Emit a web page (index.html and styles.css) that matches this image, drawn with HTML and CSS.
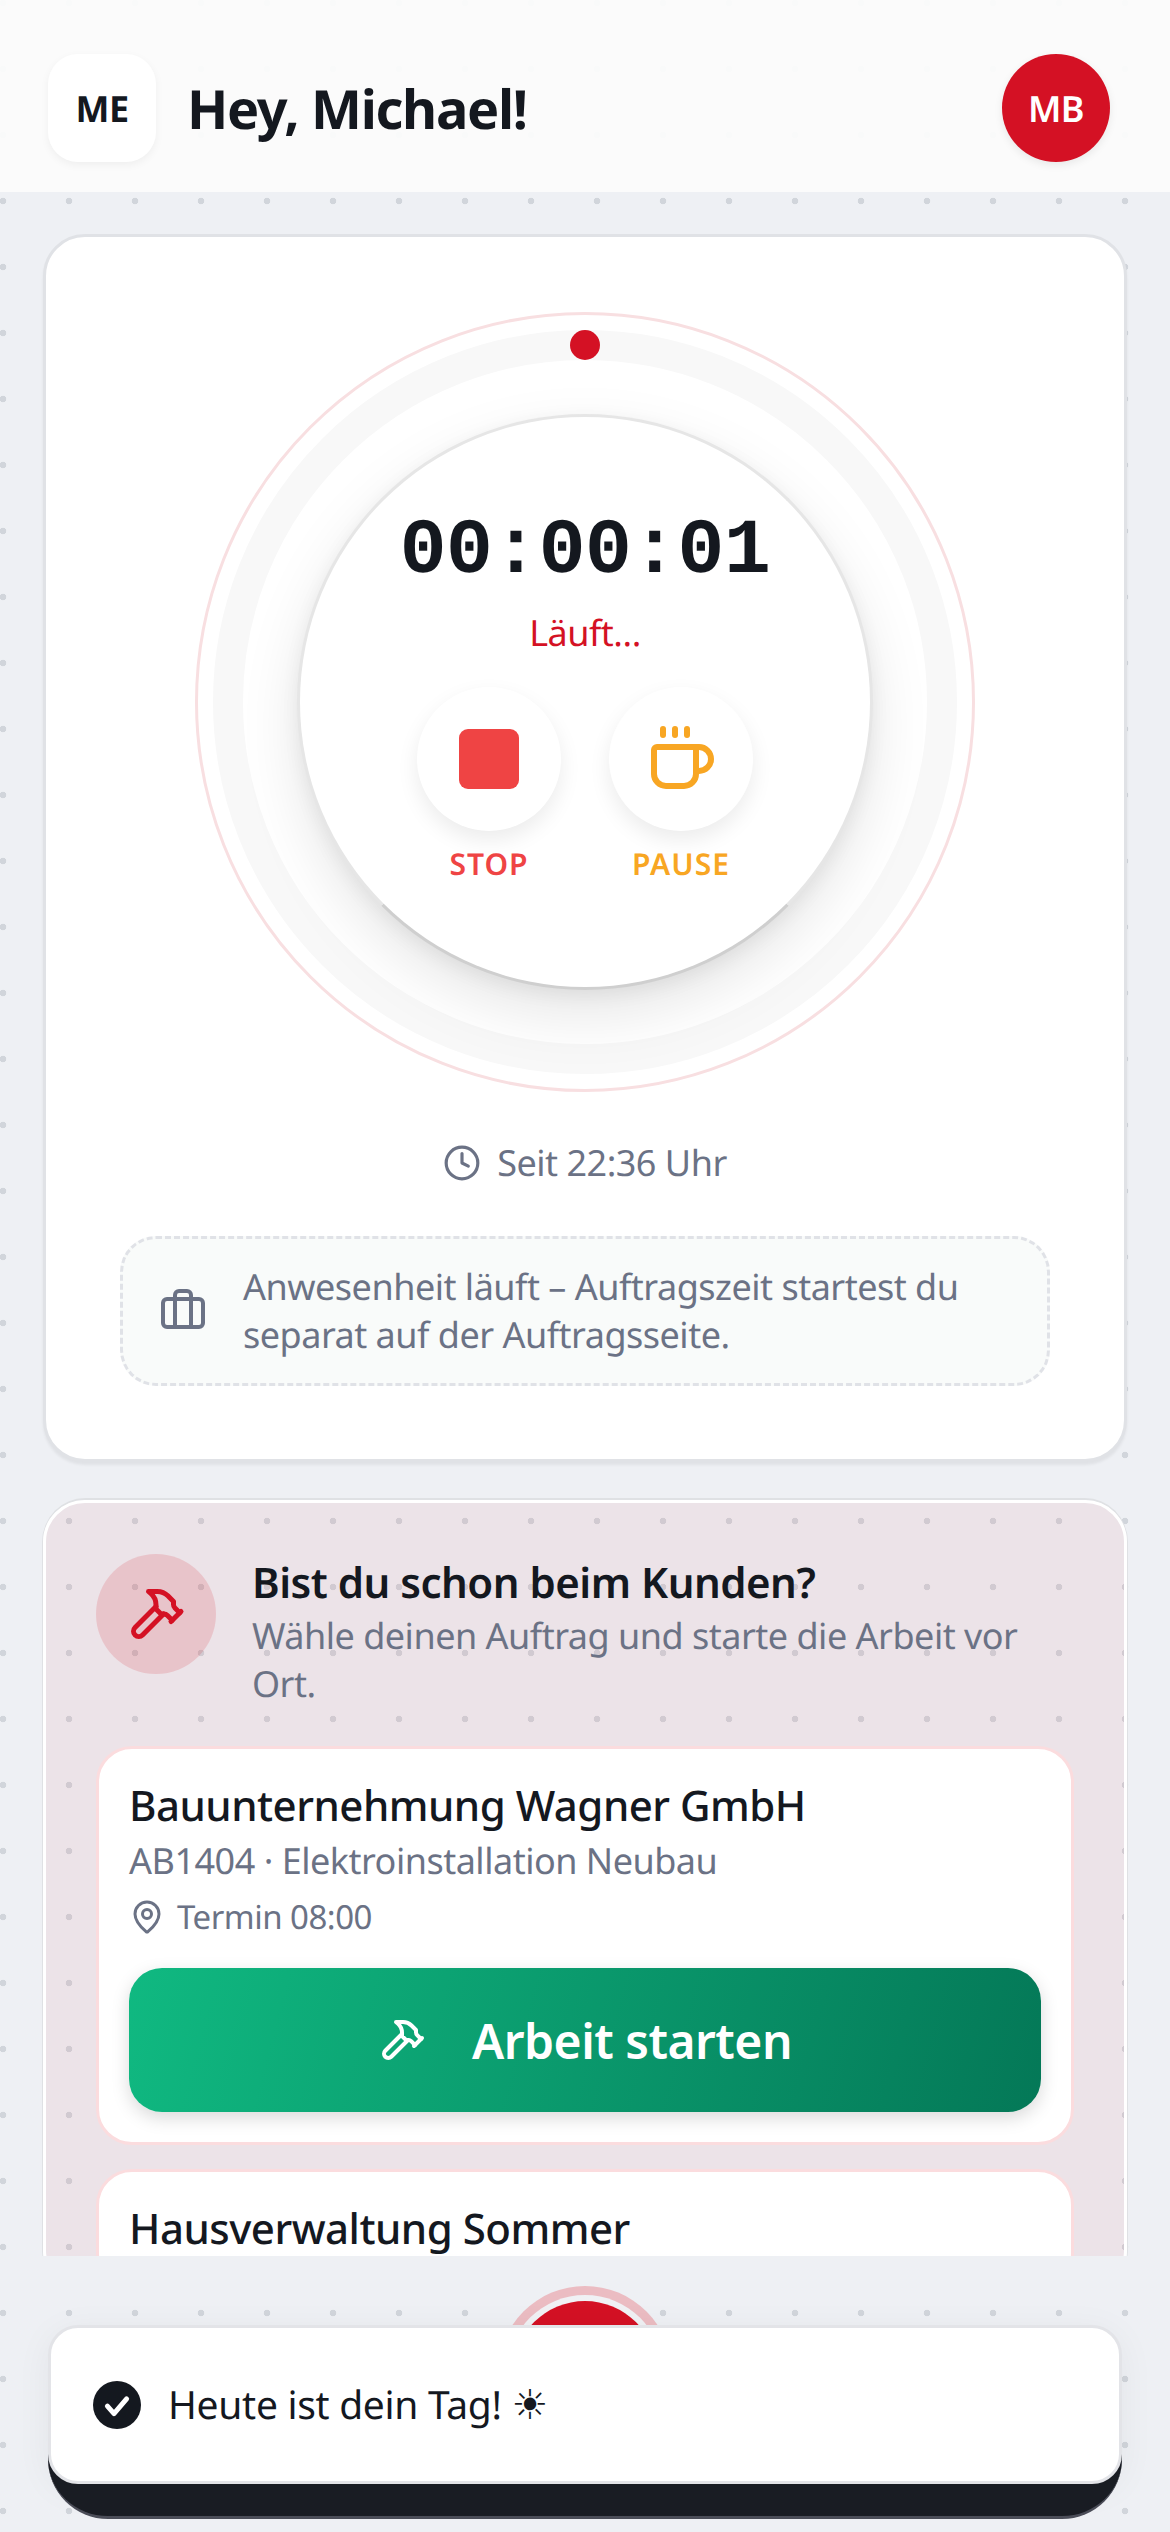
FILE: index.html
```html
<!DOCTYPE html>
<html lang="de">
  <head>
    <title>Hey, Michael!</title>
    <link rel="stylesheet" href="styles.css">
  </head>
  <body>
    <header class="top-bar">
      <div class="logo-tile">ME</div>
      <h1 class="greeting">Hey, Michael!</h1>
      <div class="avatar">MB</div>
    </header>

    <main class="content">
      <section class="card timer-card">
        <div class="dial">
          <div class="track">
            <span class="track-dot"></span>
            <div class="face">
              <div class="time">00:00:01</div>
              <div class="state">Läuft...</div>
              <div class="actions">
                <div class="action action-stop">
                  <div class="action-button"><span class="stop-square"></span></div>
                  <span class="action-label">STOP</span>
                </div>
                <div class="action action-pause">
                  <div class="action-button">
                    <svg class="icon-cup" viewBox="0 0 24 24"><path d="M10 2v2"/><path d="M14 2v2"/><path d="M16 8a1 1 0 0 1 1 1v8a4 4 0 0 1-4 4H7a4 4 0 0 1-4-4V9a1 1 0 0 1 1-1h14a4 4 0 1 1 0 8h-1"/><path d="M6 2v2"/></svg>
                  </div>
                  <span class="action-label">PAUSE</span>
                </div>
              </div>
            </div>
          </div>
        </div>

        <div class="since">
          <svg class="icon-clock" viewBox="0 0 24 24"><circle cx="12" cy="12" r="10"/><path d="M12 6v6l4 2"/></svg>
          <span>Seit 22:36 Uhr</span>
        </div>

        <div class="note">
          <svg class="icon-case" viewBox="0 0 24 24"><path d="M16 20V4a2 2 0 0 0-2-2h-4a2 2 0 0 0-2 2v16"/><rect width="20" height="14" x="2" y="6" rx="2"/></svg>
          <p>Anwesenheit läuft – Auftragszeit startest du separat auf der Auftragsseite.</p>
        </div>
      </section>

      <section class="card jobs-card">
        <div class="jobs-head">
          <div class="jobs-badge">
            <svg class="icon-hammer" viewBox="0 0 24 24"><path d="m15 12-8.373 8.373a1 1 0 1 1-3-3L12 9"/><path d="m18 15 4-4"/><path d="m21.5 11.5-1.914-1.914A2 2 0 0 1 19 8.172V7l-2.26-2.26a6 6 0 0 0-4.202-1.756L9 2.96l.92.82A6.18 6.18 0 0 1 12 8.4V10l2 2h1.172a2 2 0 0 1 1.414.586L18.5 14.5"/></svg>
          </div>
          <div class="jobs-text">
            <h2>Bist du schon beim Kunden?</h2>
            <p>Wähle deinen Auftrag und starte die Arbeit vor Ort.</p>
          </div>
        </div>

        <div class="job">
          <h3>Bauunternehmung Wagner GmbH</h3>
          <p class="job-ref">AB1404 · Elektroinstallation Neubau</p>
          <p class="job-date">
            <svg class="icon-pin" viewBox="0 0 24 24"><path d="M20 10c0 4.993-5.539 10.193-7.399 11.799a1 1 0 0 1-1.202 0C9.539 20.193 4 14.993 4 10a8 8 0 0 1 16 0"/><circle cx="12" cy="10" r="3"/></svg>
            <span>Termin 08:00</span>
          </p>
          <button class="start-button">
            <svg class="icon-start" viewBox="0 0 24 24"><path d="m15 12-8.373 8.373a1 1 0 1 1-3-3L12 9"/><path d="m18 15 4-4"/><path d="m21.5 11.5-1.914-1.914A2 2 0 0 1 19 8.172V7l-2.26-2.26a6 6 0 0 0-4.202-1.756L9 2.96l.92.82A6.18 6.18 0 0 1 12 8.4V10l2 2h1.172a2 2 0 0 1 1.414.586L18.5 14.5"/></svg>
            <span>Arbeit starten</span>
          </button>
        </div>

        <div class="job">
          <h3>Hausverwaltung Sommer</h3>
        </div>
      </section>
    </main>

    <div class="fab"></div>
    <div class="nav-bar"></div>
    <div class="toast">
      <svg class="icon-check" viewBox="0 0 24 24"><circle class="check-disc" cx="12" cy="12" r="12"/><path class="check-mark" d="M7.2 12.6l3.3 3.7 6.3-7.4"/></svg>
      <span>Heute ist dein Tag! <span class="sun">☀</span></span>
    </div>
  </body>
</html>
```

FILE: styles.css
```css
html, body {
  margin: 0;
  height: 100%;
}
body {
  position: relative;
  width: 1170px;
  height: 2532px;
  overflow: hidden;
  font-family: "Noto Sans", sans-serif;
  text-rendering: geometricPrecision;
  letter-spacing: -0.5px;
  color: #14181f;
  background-color: #eef0f4;
  background-image: radial-gradient(circle, #d1d5db 3px, transparent 3.6px);
  background-size: 66px 66px;
  background-position: -30px -30px;
}
h1, h2, h3, p {
  margin: 0;
}
svg {
  display: block;
  flex: none;
  fill: none;
  stroke: currentColor;
  stroke-width: 2;
  stroke-linecap: round;
  stroke-linejoin: round;
}

/* header */
.top-bar {
  display: flex;
  align-items: center;
  height: 192px;
  padding: 24px 60px 0 48px;
  box-sizing: border-box;
  background: rgba(251, 251, 251, 0.96);
}
.logo-tile {
  width: 108px;
  height: 108px;
  border-radius: 30px;
  background: #fff;
  box-shadow: 0 3px 9px rgba(0, 0, 0, 0.05);
  display: flex;
  align-items: center;
  justify-content: center;
  font-size: 36px;
  font-weight: 700;
}
.greeting {
  margin-left: 31px;
  font-size: 54px;
  font-weight: 700;
  letter-spacing: -1.3px;
  flex: 1;
}
.avatar {
  width: 108px;
  height: 108px;
  border-radius: 50%;
  background: #d41124;
  color: #fff;
  box-shadow: 0 3px 9px rgba(0, 0, 0, 0.08);
  display: flex;
  align-items: center;
  justify-content: center;
  font-size: 36px;
  font-weight: 600;
}

/* scrolling area */
.content {
  height: 2064px;
  padding: 42px 43px 0;
  box-sizing: border-box;
  overflow: hidden;
  display: flex;
  flex-direction: column;
  gap: 38px;
}
.card {
  flex: none;
  border-radius: 42px;
  box-sizing: border-box;
}

/* timer */
.timer-card {
  height: 1228px;
  padding-top: 75px;
  background: #fff;
  border: 3px solid #e0e2e6;
  box-shadow: 0 3px 3px rgba(0, 0, 0, 0.06);
  display: flex;
  flex-direction: column;
  align-items: center;
}
.dial {
  width: 780px;
  height: 780px;
  box-sizing: border-box;
  border: 3px solid #f8dfe1;
  border-radius: 50%;
  display: flex;
  align-items: center;
  justify-content: center;
}
.track {
  position: relative;
  width: 744px;
  height: 744px;
  box-sizing: border-box;
  border: 30px solid #f8f8f8;
  border-radius: 50%;
  display: flex;
  align-items: center;
  justify-content: center;
}
.track-dot {
  position: absolute;
  top: -30px;
  left: 327px;
  width: 30px;
  height: 30px;
  border-radius: 50%;
  background: #d41124;
}
.face {
  width: 576px;
  height: 576px;
  box-sizing: border-box;
  padding-top: 90px;
  border: 3px solid #e6e6e6;
  border-bottom-color: #cfcfcf;
  border-radius: 50%;
  background: #fff;
  box-shadow: 0 24px 60px rgba(0, 0, 0, 0.1), 0 6px 18px rgba(0, 0, 0, 0.06);
  display: flex;
  flex-direction: column;
  align-items: center;
}
.time {
  font-family: "Liberation Mono", monospace;
  font-size: 78px;
  font-weight: 700;
  line-height: 90px;
}
.state {
  margin-top: 12px;
  font-size: 36px;
  line-height: 48px;
  color: #d41124;
}
.actions {
  display: flex;
  gap: 48px;
  margin-top: 30px;
}
.action {
  display: flex;
  flex-direction: column;
  align-items: center;
  gap: 12px;
}
.action-button {
  width: 144px;
  height: 144px;
  border-radius: 50%;
  background: #fff;
  box-shadow: 0 9px 21px rgba(0, 0, 0, 0.08);
  display: flex;
  align-items: center;
  justify-content: center;
}
.action-label {
  font-size: 30px;
  font-weight: 600;
  line-height: 42px;
  letter-spacing: 1px;
}
.action-stop .action-label {
  color: #ef4444;
}
.action-pause .action-label {
  color: #f8a623;
}
.stop-square {
  width: 60px;
  height: 60px;
  border-radius: 9px;
  background: #ef4444;
}
.icon-cup {
  width: 72px;
  height: 72px;
  color: #f8a623;
}
.since {
  margin-top: 47px;
  display: flex;
  align-items: center;
  gap: 16px;
  font-size: 36px;
  line-height: 48px;
  color: #6b7285;
}
.icon-clock {
  width: 38px;
  height: 38px;
}
.note {
  margin-top: 49px;
  width: 930px;
  height: 150px;
  box-sizing: border-box;
  padding: 0 36px;
  border: 3px dashed #e0e2e7;
  border-radius: 36px;
  background: #f9fbfa;
  display: flex;
  align-items: center;
  gap: 36px;
  font-size: 36px;
  line-height: 48px;
  color: #6b7285;
}
.icon-case {
  width: 48px;
  height: 48px;
}

/* jobs */
.jobs-card {
  padding: 51px 50px 0;
  background: rgba(212, 17, 36, 0.055);
  border: 3px solid #fff;
  box-shadow: 0 0 0 1px #dfe1e4, 0 -2px 0 #dfe1e4;
}
.jobs-head {
  display: flex;
  gap: 36px;
}
.jobs-badge {
  flex: none;
  width: 120px;
  height: 120px;
  border-radius: 50%;
  background: rgba(212, 17, 36, 0.15);
  color: #d41124;
  display: flex;
  align-items: center;
  justify-content: center;
}
.icon-hammer {
  width: 60px;
  height: 60px;
}
.jobs-text h2 {
  font-size: 42px;
  font-weight: 600;
  line-height: 58px;
}
.jobs-text p {
  font-size: 36px;
  line-height: 48px;
  color: #6b7285;
}
.job {
  margin-top: 24px;
  padding: 30px;
  border: 3px solid #fbdcde;
  border-radius: 36px;
  background: #fff;
}
.jobs-head + .job {
  margin-top: 38px;
}
.job h3 {
  font-size: 42px;
  font-weight: 500;
  line-height: 54px;
}
.job-ref {
  margin-top: 4px;
  font-size: 36px;
  line-height: 48px;
  color: #6b7285;
}
.job-date {
  margin-top: 8px;
  display: flex;
  align-items: center;
  gap: 12px;
  font-size: 33px;
  line-height: 48px;
  color: #6b7285;
}
.icon-pin {
  width: 36px;
  height: 36px;
}
.start-button {
  margin-top: 27px;
  width: 100%;
  height: 144px;
  border: none;
  border-radius: 33px;
  background: linear-gradient(105deg, #10b981, #047857);
  box-shadow: 0 6px 18px rgba(0, 0, 0, 0.15);
  color: #fff;
  font-family: inherit;
  font-size: 48px;
  font-weight: 600;
  letter-spacing: -0.5px;
  display: flex;
  align-items: center;
  justify-content: center;
  gap: 46px;
}
.icon-start {
  width: 48px;
  height: 48px;
}

/* bottom overlays */
.fab {
  position: absolute;
  top: 2301px;
  left: 513px;
  width: 144px;
  height: 144px;
  border-radius: 50%;
  background: #d41124;
  box-shadow: 0 0 0 6px #f0f1f4, 0 0 0 15px #ebbcc2;
}
.nav-bar {
  position: absolute;
  left: 48px;
  right: 48px;
  bottom: 13px;
  height: 150px;
  box-sizing: border-box;
  border-radius: 60px;
  background: #1a1d24;
  border-bottom: 3px solid #4b4d58;
}
.toast {
  position: absolute;
  left: 48px;
  top: 2325px;
  width: 1074px;
  height: 159px;
  box-sizing: border-box;
  padding-left: 42px;
  border: 3px solid #e3e4e8;
  border-radius: 30px;
  background: #fff;
  box-shadow: 0 6px 36px rgba(0, 0, 0, 0.05);
  display: flex;
  align-items: center;
  gap: 27px;
  font-size: 39px;
  letter-spacing: -0.3px;
}
.icon-check {
  width: 48px;
  height: 48px;
}
.check-disc {
  fill: #14181f;
  stroke: none;
}
.check-mark {
  stroke: #fff;
  stroke-width: 2.5;
}
.sun {
  font-family: "DejaVu Sans", sans-serif;
  font-size: 41px;
}
```
